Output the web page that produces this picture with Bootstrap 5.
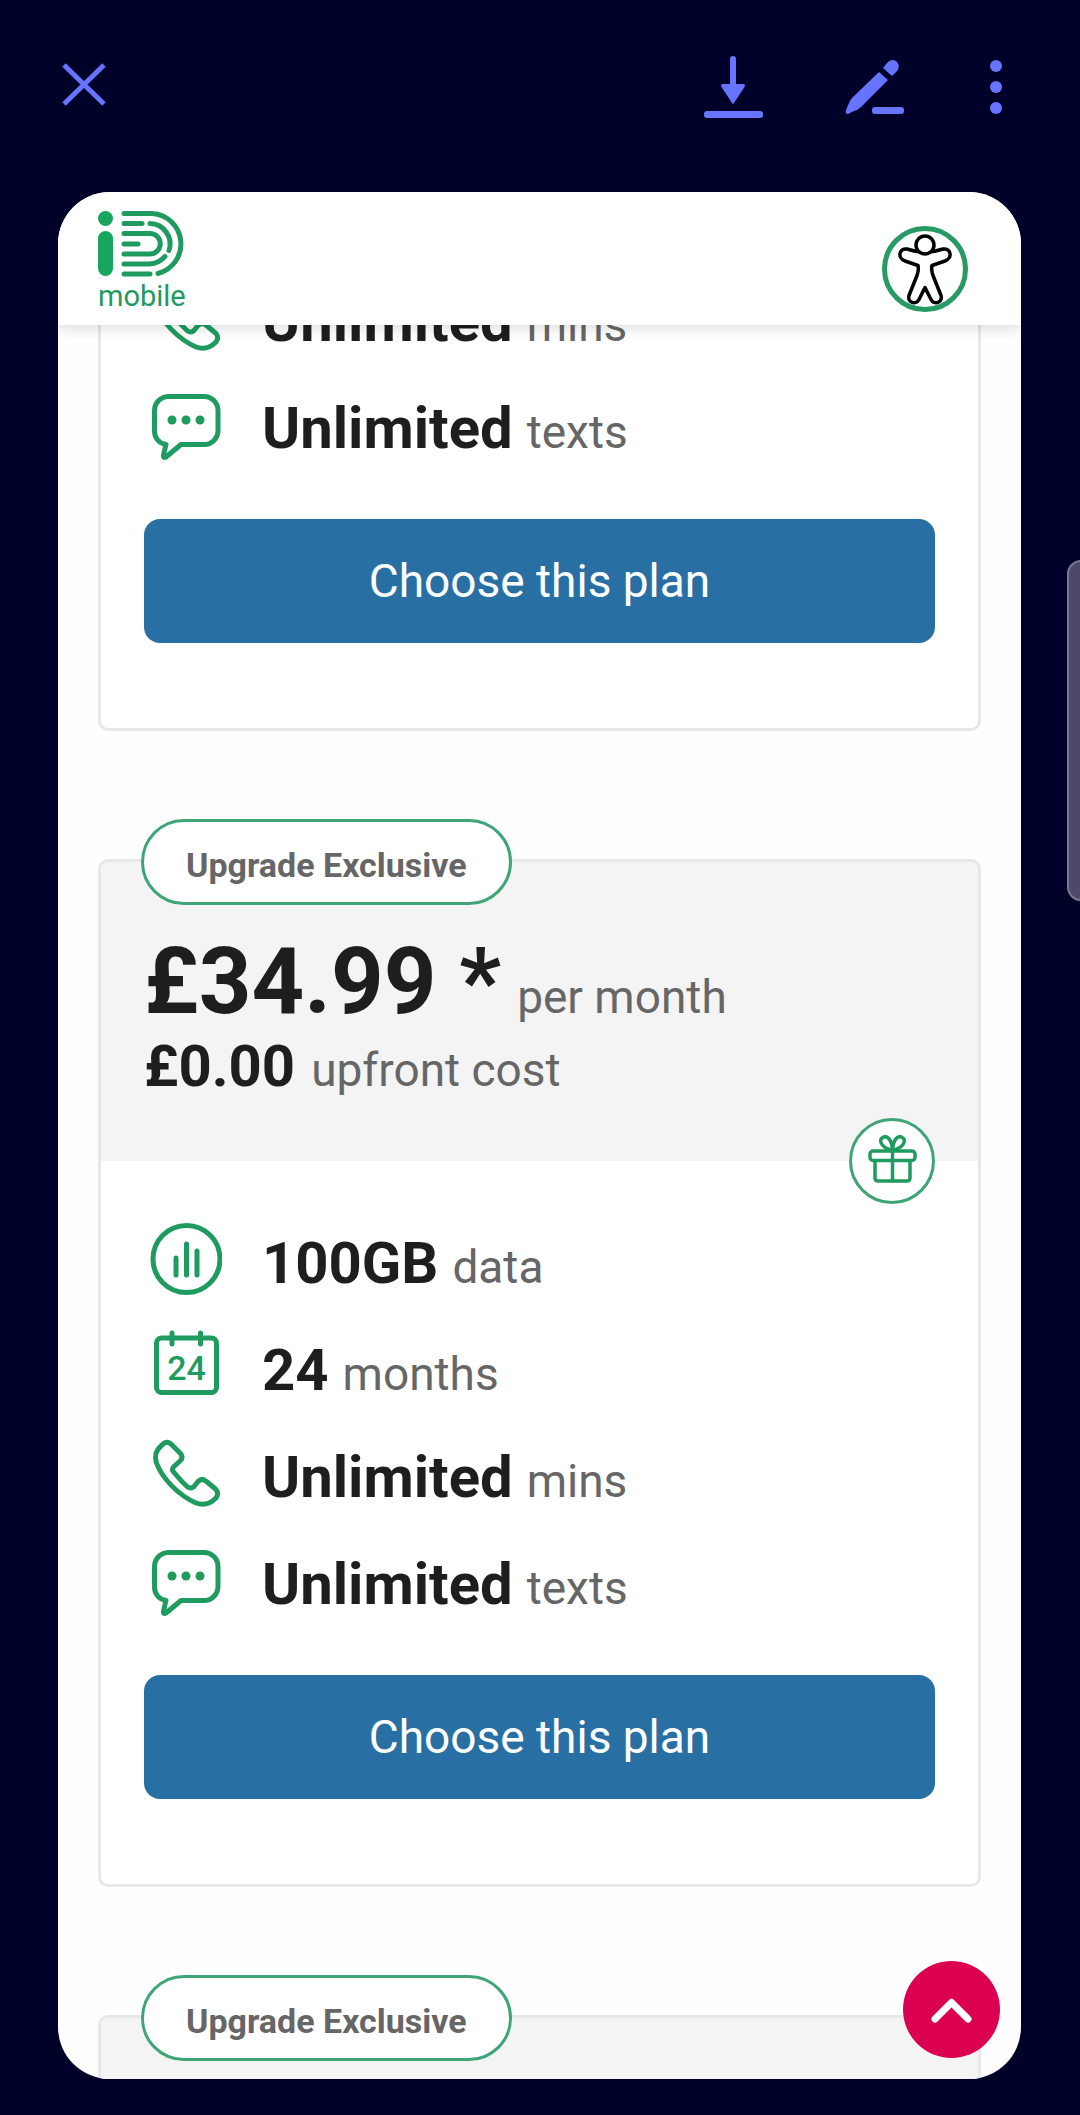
<!DOCTYPE html>
<html lang="en">
<head>
<meta charset="utf-8">
<meta name="viewport" content="width=device-width, initial-scale=1">
<title>iD Mobile – upgrade plans</title>
<link href="https://cdn.jsdelivr.net/npm/bootstrap@5.3.0/dist/css/bootstrap.min.css" rel="stylesheet">
<style>
  :root { --brand: #1f9b60; --ink: #1e1e1e; --soft: #666; --line: #e8e8e8; --tool: #6674ff; }
  body { background: #000128; color: var(--soft); font-family: Roboto, "Liberation Sans", sans-serif; font-size: 46px; line-height: 1; }
  svg { display: block; }
  .tool-bar { height: 192px; flex-shrink: 0; padding: 50px 71px 0 57px; color: var(--tool); }
  .tool-bar .tools { gap: 63px; }
  .icon-btn { color: inherit; background: none; border: 0; padding: 0; }
  .icon-line { fill: none; stroke: currentColor; stroke-width: 5; stroke-linecap: round; stroke-linejoin: round; }
  .page-sheet { margin: 0 59px 36px 58px; border-radius: 52px; background: #fefefe; min-height: 0; }
  .site-head { height: 133px; padding: 4px 53px 0 40px; background: #fff; box-shadow: 0 2px 14px rgba(0,0,0,.16); z-index: 3; flex-shrink: 0; }
  .brand-link { color: var(--brand); font-size: 29px; text-decoration: none; gap: 4px; }
  .round-86 { width: 86px; height: 86px; }
  .plans { padding: 0 40px; gap: 128px; }
  .plan { border: 3px solid var(--line); border-radius: 10px; flex-shrink: 0; background: #fff; }
  .plan-cut { margin-top: -62px; border-top: 0; border-radius: 0 0 10px 10px; }
  .plan-cut .plan-body { padding-top: 0; }
  .plan-head { background: #f4f4f4; padding: 74px 45px 65px 43px; min-height: 299px; border-radius: 8px 8px 0 0; }
  .plan-body { padding: 44px 43px 85px; }
  .flag { top: -43px; left: 40px; height: 86px; padding: 6px 42px 0; border: 3px solid #3fa577; border-radius: 43px; background: #fff; font-size: 34px; font-weight: 700; }
  .gift { right: 43px; bottom: -43px; color: var(--brand); }
  .strong-lg { font-size: 92px; font-weight: 700; color: var(--ink); }
  .strong-md { font-size: 58px; font-weight: 700; color: var(--ink); }
  .price-line { gap: 16px; margin-bottom: 9px; }
  .fact { height: 107px; padding-left: 6px; gap: 40px; }
  .fact svg { width: 72px; height: 72px; color: var(--brand); flex-shrink: 0; }
  .fact-text { gap: 14px; padding-top: 8px; }
  .btn-plan { --bs-btn-color: #fff; --bs-btn-bg: #2870a3; --bs-btn-hover-color: #fff; --bs-btn-hover-bg: #1f5f8d; --bs-btn-active-bg: #1f5f8d; --bs-btn-active-color: #fff; height: 124px; margin-top: 42px; border: 0; border-radius: 16px; font-size: 46px; line-height: 1; }
  .to-top { right: 21px; bottom: 21px; width: 97px; height: 97px; border: 0; padding: 0; background: #dc0050; color: #fff; z-index: 4; }
  .edge-handle { right: -20px; top: 560px; width: 33px; height: 341px; border: 2px solid #7b7893; border-radius: 14px; background: #4d4968; }
</style>
<script src="https://cdn.jsdelivr.net/npm/bootstrap@5.3.0/dist/js/bootstrap.bundle.min.js"></script>
</head>
<body class="vh-100 d-flex flex-column position-relative overflow-hidden">

<svg class="d-none" aria-hidden="true">
  <symbol id="i-data" viewBox="0 0 72 72">
    <g class="icon-line"><circle cx="36.500" cy="36" r="33.500"/><path d="M26 35v17M36.500 21v31M47 28v24"/></g>
  </symbol>
  <symbol id="i-phone" viewBox="0 0 72 72">
    <path class="icon-line" d="M12 8q5-5.500 10 0l8 8q4 4 0 8l-6 5.500q-3 3 0 6Q31 44 37 49.500q4 3 7 0l4-5q4-4 8.500 0l9 7.500q4 4 .5 9C60 67 54 69 46 66 28 58 12 41 6.500 26 4 18 6 13 12 8z"/>
  </symbol>
  <symbol id="i-chat" viewBox="0 0 72 72">
    <path class="icon-line" d="M18 8.500h36a14 14 0 0 1 14 14v20a14 14 0 0 1-14 14H31L16 69q-3 1.500-2.500-2L16 56.500C9 55.500 4.500 50 4.500 43V22.500a14 14 0 0 1 13.500-14z"/>
    <g fill="currentColor"><circle cx="22" cy="32" r="4.500"/><circle cx="36" cy="32" r="4.500"/><circle cx="50" cy="32" r="4.500"/></g>
  </symbol>
</svg>

<header class="tool-bar d-flex justify-content-between align-items-start">
  <button class="icon-btn" aria-label="Close">
    <svg width="54" height="70" viewBox="57 50 54 70"><path d="M64 65l40 39M104 65L64 104" fill="none" stroke="currentColor" stroke-width="5"/></svg>
  </button>
  <div class="tools d-flex">
    <button class="icon-btn" aria-label="Download">
      <svg width="80" height="70" viewBox="692 50 80 70"><path d="M732 59v30" stroke="currentColor" stroke-width="6" stroke-linecap="round"/><path d="M722 84h20q3 0 1.500 3L733 103q-1 2-2 0L720.500 87q-1.500-3 1.500-3z" fill="currentColor"/><rect x="703" y="111" width="59" height="7" rx="3" fill="currentColor"/></svg>
    </button>
    <button class="icon-btn" aria-label="Edit">
      <svg width="80" height="70" viewBox="837 50 80 70"><g fill="currentColor"><path d="M880 72l9 8-27 27q-3 3-7 4l-6 3q-3 0-2-4l3-7q1-3 4-6z"/><path d="M884 68l4-5q4-5 9-2 5 5 1 10l-5 5z"/><rect x="873" y="107" width="32" height="7" rx="3"/></g></svg>
    </button>
    <button class="icon-btn" aria-label="More options">
      <svg width="30" height="70" viewBox="979 50 30 70"><g fill="currentColor"><circle cx="996" cy="66" r="6"/><circle cx="996" cy="87" r="6"/><circle cx="996" cy="108" r="6"/></g></svg>
    </button>
  </div>
</header>

<div class="page-sheet flex-grow-1 d-flex flex-column position-relative overflow-hidden">
  <div class="site-head d-flex justify-content-between align-items-center position-relative">
    <a class="brand-link d-flex flex-column" href="#" aria-label="iD mobile">
      <svg width="88" height="68" viewBox="98 212 88 68">
        <circle cx="105.500" cy="220.500" r="7.500" fill="#18a65f"/><rect x="98" y="233" width="15" height="45" rx="7.500" fill="#18a65f"/>
        <g fill="none" stroke="currentColor" stroke-width="5" stroke-linecap="round">
          <path d="M124 215.500h28a30.500 30.500 0 0 1 6 60"/><path d="M124 276h26"/>
          <path d="M124 225.500h18M150 225.500a20.500 20.500 0 0 1 19 27"/>
          <path d="M124 266h25q9 0 16-7.500"/>
          <path d="M124 235.500h26a10 10 0 0 1 0 20.500h-26M124 246h14"/>
        </g>
      </svg>
      <span>mobile</span>
    </a>
    <button class="icon-btn mt-3" aria-label="Accessibility options">
      <svg class="round-86" viewBox="0 0 86 86">
        <circle cx="43" cy="43" r="40.500" fill="#fff" stroke="#279a66" stroke-width="5"/>
        <g fill="#fff" stroke="#000" stroke-width="3.500" stroke-linejoin="round">
          <path d="M25 23q18 6.500 36 0c8-1 10 9 2 12l-13 4.500q-1 4 1 10l8 20c2 7-7 10-10 4l-6-12-6 12c-3 6-12 3-10-4l8-20q2-6 1-10L23 35c-8-3-6-13 2-12z"/>
          <circle cx="43" cy="19" r="9"/>
        </g>
      </svg>
    </button>
  </div>

  <main class="plans d-flex flex-column">
    <article class="plan plan-cut">
      <div class="plan-body">
        <div class="fact d-flex align-items-center"><svg><use href="#i-phone"/></svg><div class="fact-text d-flex align-items-baseline"><span class="strong-md">Unlimited</span><span>mins</span></div></div>
        <div class="fact d-flex align-items-center"><svg><use href="#i-chat"/></svg><div class="fact-text d-flex align-items-baseline"><span class="strong-md">Unlimited</span><span>texts</span></div></div>
        <button class="btn btn-plan w-100">Choose this plan</button>
      </div>
    </article>

    <article class="plan">
      <div class="plan-head position-relative">
        <div class="flag position-absolute d-flex align-items-center">Upgrade Exclusive</div>
        <div class="price-line d-flex align-items-baseline"><span class="strong-lg">£34.99 *</span><span>per month</span></div>
        <div class="d-flex align-items-baseline gap-3"><span class="strong-md">£0.00</span><span>upfront cost</span></div>
        <button class="icon-btn gift position-absolute" aria-label="Gift included">
          <svg class="round-86" viewBox="0 0 86 86">
            <circle cx="43" cy="43" r="41.500" fill="#fff" stroke="#3fa577" stroke-width="3"/>
            <g fill="none" stroke="currentColor" stroke-width="3.500" stroke-linejoin="round">
              <rect x="21" y="33" width="45" height="9.500" rx="3"/><path d="M26 43v17q0 3 3 3h29q3 0 3-3V43M43.500 32v31"/>
              <path d="M43.500 32C34 31 29 23 33 20c5-4 10 2 10.500 12zM43.500 32C53 31 58 23 54 20c-5-4-10 2-10.500 12z"/>
            </g>
          </svg>
        </button>
      </div>
      <div class="plan-body">
        <div class="fact d-flex align-items-center"><svg><use href="#i-data"/></svg><div class="fact-text d-flex align-items-baseline"><span class="strong-md">100GB</span><span>data</span></div></div>
        <div class="fact d-flex align-items-center"><svg viewBox="0 0 72 72"><rect class="icon-line" x="6.500" y="8" width="60" height="54.500" rx="5"/><path class="icon-line" d="M22 3v11M50.500 3v11"/><text x="36.500" y="50" text-anchor="middle" font-size="34" font-weight="500" fill="currentColor">24</text></svg><div class="fact-text d-flex align-items-baseline"><span class="strong-md">24</span><span>months</span></div></div>
        <div class="fact d-flex align-items-center"><svg><use href="#i-phone"/></svg><div class="fact-text d-flex align-items-baseline"><span class="strong-md">Unlimited</span><span>mins</span></div></div>
        <div class="fact d-flex align-items-center"><svg><use href="#i-chat"/></svg><div class="fact-text d-flex align-items-baseline"><span class="strong-md">Unlimited</span><span>texts</span></div></div>
        <button class="btn btn-plan w-100">Choose this plan</button>
      </div>
    </article>

    <article class="plan">
      <div class="plan-head position-relative">
        <div class="flag position-absolute d-flex align-items-center">Upgrade Exclusive</div>
      </div>
    </article>
  </main>

  <button class="to-top rounded-circle position-absolute" aria-label="Back to top">
    <svg width="97" height="97" viewBox="0 0 97 97"><path d="M32 58l16.500-16.500L65 58" fill="none" stroke="currentColor" stroke-width="7" stroke-linecap="round" stroke-linejoin="round"/></svg>
  </button>
</div>

<div class="edge-handle position-absolute"></div>
</body>
</html>
